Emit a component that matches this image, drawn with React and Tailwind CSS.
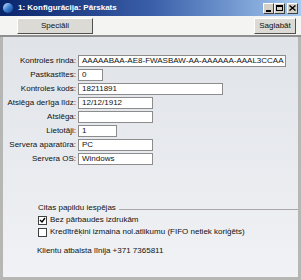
import React from 'react';

const rows = [
  { label: 'Kontroles rinda:', value: 'AAAAABAA-AE8-FWASBAW-AA-AAAAAA-AAAL3CCAA', w: 'w-[208px]' },
  { label: 'Pastkastītes:', value: '0', w: 'w-[25px]' },
  { label: 'Kontroles kods:', value: '18211891', w: 'w-[145px]' },
  { label: 'Atslēga derīga līdz:', value: '12/12/1912', w: 'w-[75px]' },
  { label: 'Atslēga:', value: '', w: 'w-[75px]' },
  { label: 'Lietotāji:', value: '1', w: 'w-[39px]' },
  { label: 'Servera aparatūra:', value: 'PC', w: 'w-[75px]' },
  { label: 'Servera OS:', value: 'Windows', w: 'w-[75px]' },
];

function CaptionButton({ children }) {
  return (
    <div className="w-[11px] h-[11px] bg-[#d4d0c8] border border-t-white border-l-white border-b-[#404040] border-r-[#404040] flex items-center justify-center">
      {children}
    </div>
  );
}

function Checkbox({ checked }) {
  return (
    <div className="w-[9px] h-[9px] bg-white border border-[#404040] flex items-center justify-center">
      {checked && (
        <svg width="7" height="7" viewBox="0 0 7 7">
          <path d="M1 3 L3 5 L6 1" stroke="#000" strokeWidth="1.4" fill="none" />
        </svg>
      )}
    </div>
  );
}

export default function App() {
  return (
    <div className="w-[301px] h-[280px] flex flex-col overflow-hidden text-[8px] leading-none text-[#111] font-['Liberation_Sans',Arial,sans-serif]">
      {/* Title bar */}
      <div className="h-[16px] flex items-center px-[3px] bg-gradient-to-r from-[#0a246a] via-[#3a5ea8] to-[#a6caf0]">
        <div className="w-[10px] h-[10px] rounded-full bg-gradient-to-br from-[#d8ecff] via-[#3b7fd0] to-[#0b3d91]" />
        <span className="ml-[5px] text-white font-bold">1: Konfigurācija: Pārskats</span>
        <div className="ml-auto flex items-center">
          <CaptionButton>
            <div className="w-[5px] h-[2px] bg-black mt-[5px]" />
          </CaptionButton>
          <CaptionButton>
            <div className="w-[7px] h-[6px] border border-black border-t-2" />
          </CaptionButton>
          <div className="w-[2px]" />
          <CaptionButton>
            <svg width="7" height="6" viewBox="0 0 7 6">
              <path d="M0.5 0.5 L6.5 5.5 M6.5 0.5 L0.5 5.5" stroke="#000" strokeWidth="1.4" />
            </svg>
          </CaptionButton>
        </div>
      </div>

      {/* Toolbar */}
      <div className="h-[21px] flex items-center justify-between pl-[17px] pr-[5px] bg-[#f4f4f3] border-b-2 border-[#8f8f8f]">
        <button className="w-[76px] h-[16px] bg-[#dcdad5] border border-t-white border-l-white border-b-[#505050] border-r-[#505050] text-[8px]">
          Speciāli
        </button>
        <button className="w-[42px] h-[16px] bg-[#dcdad5] border border-t-white border-l-white border-b-[#505050] border-r-[#505050] text-[8px]">
          Saglabāt
        </button>
      </div>

      {/* Content */}
      <div className="flex-1 flex flex-col border-x-[3px] border-b-[3px] border-[#b6b6b4] bg-gradient-to-b from-[#e0e3e8] to-[#f0f2f5] pt-[18px]">
        <div className="flex flex-col gap-[2px]">
          {rows.map((r) => (
            <div key={r.label} className="flex items-center h-[12px]">
              <div className="w-[73px] text-right">{r.label}</div>
              <div className={`ml-[2px] h-[12px] ${r.w} bg-white border border-[#8c8c8c] flex items-center pl-[3px]`}>
                {r.value}
              </div>
            </div>
          ))}
        </div>

        <div className="mt-[39px] pl-[35px] flex items-center">
          <span>Citas papildu iespējas</span>
          <div className="flex-1 h-px bg-[#a8a8a8] ml-[3px] mt-[3px]" />
        </div>
        <div className="mt-[3px] pl-[35px] flex items-center gap-[3px] h-[10px]">
          <Checkbox checked />
          <span>Bez pārbaudes izdrukām</span>
        </div>
        <div className="mt-[2px] pl-[35px] flex items-center gap-[3px] h-[10px]">
          <Checkbox />
          <span>Kredītrēķini izmaina nol.atlikumu (FIFO netiek koriģēts)</span>
        </div>
        <div className="mt-[10px] pl-[34px]">Klientu atbalsta līnija +371 7365811</div>
      </div>
    </div>
  );
}
